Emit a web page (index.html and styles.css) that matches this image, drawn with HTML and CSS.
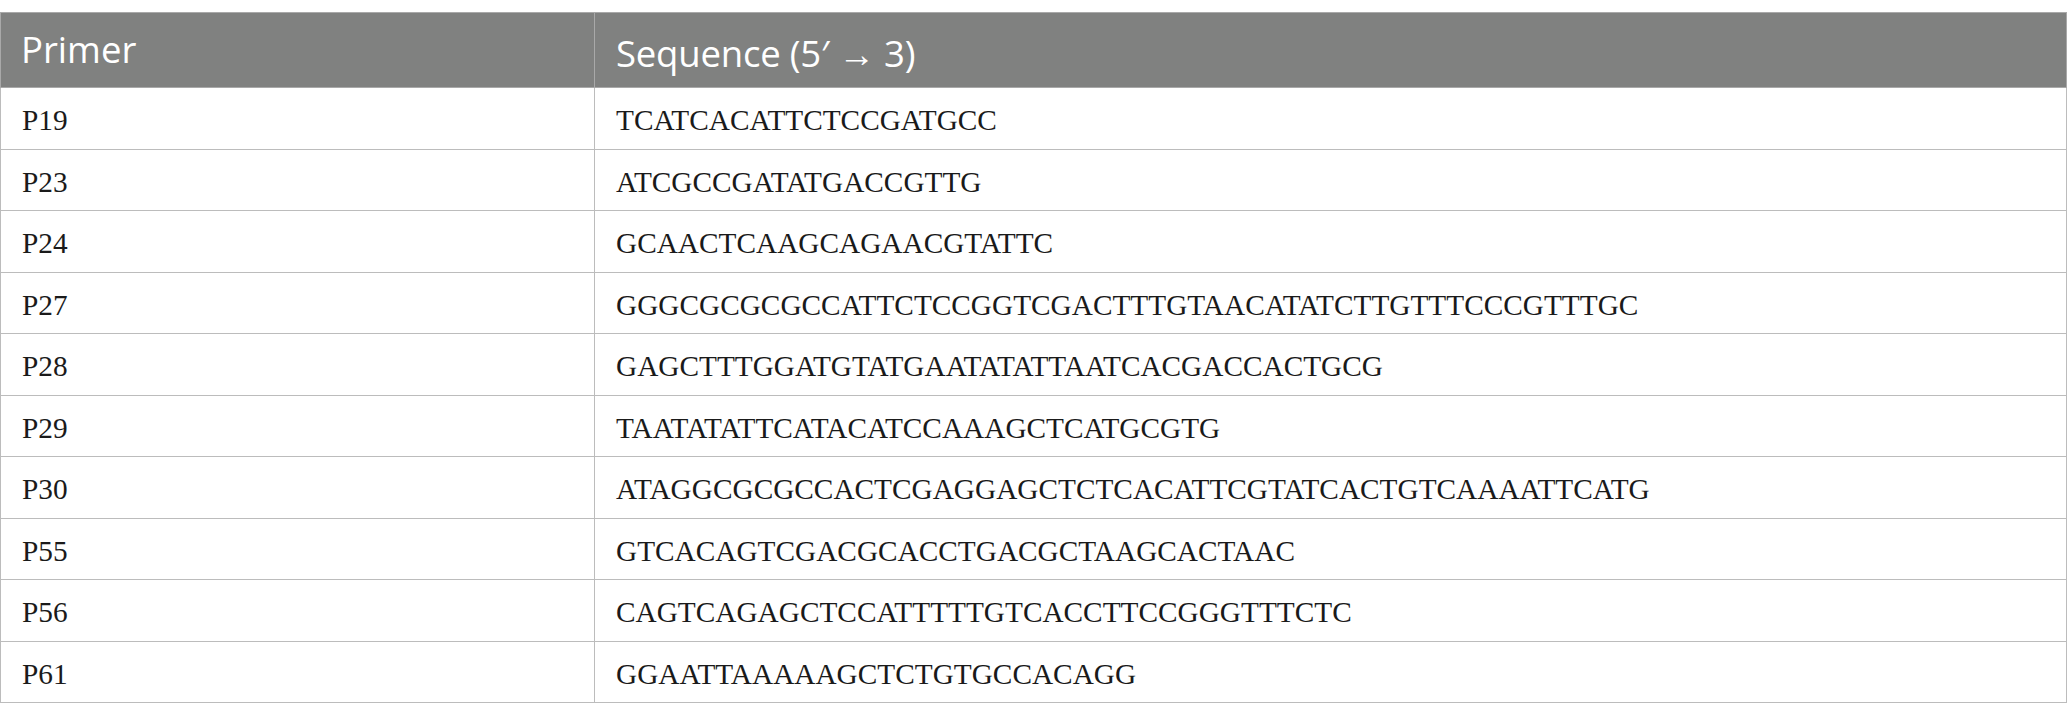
FILE: index.html
```html
<!DOCTYPE html>
<html lang="en">
<head>
<meta charset="utf-8">
<title>Primers</title>
<link rel="stylesheet" href="styles.css">
</head>
<body>
<table class="primers">
  <thead>
    <tr>
      <th class="col-primer">Primer</th>
      <th class="col-seq"><span class="seq-head">Sequence (5′ → 3)</span></th>
    </tr>
  </thead>
  <tbody>
    <tr><td>P19</td><td>TCATCACATTCTCCGATGCC</td></tr>
    <tr><td>P23</td><td>ATCGCCGATATGACCGTTG</td></tr>
    <tr><td>P24</td><td>GCAACTCAAGCAGAACGTATTC</td></tr>
    <tr><td>P27</td><td>GGGCGCGCGCCATTCTCCGGTCGACTTTGTAACATATCTTGTTTCCCGTTTGC</td></tr>
    <tr><td>P28</td><td>GAGCTTTGGATGTATGAATATATTAATCACGACCACTGCG</td></tr>
    <tr><td>P29</td><td>TAATATATTCATACATCCAAAGCTCATGCGTG</td></tr>
    <tr><td>P30</td><td>ATAGGCGCGCCACTCGAGGAGCTCTCACATTCGTATCACTGTCAAAATTCATG</td></tr>
    <tr><td>P55</td><td>GTCACAGTCGACGCACCTGACGCTAAGCACTAAC</td></tr>
    <tr><td>P56</td><td>CAGTCAGAGCTCCATTTTTGTCACCTTCCGGGTTTCTC</td></tr>
    <tr><td>P61</td><td>GGAATTAAAAAGCTCTGTGCCACAGG</td></tr>
  </tbody>
</table>
</body>
</html>
```

FILE: styles.css
```css
html, body {
  margin: 0;
  padding: 0;
  background: #ffffff;
}

body {
  padding-top: 12px;
}

.primers {
  border-collapse: collapse;
  width: 2067px;
  table-layout: fixed;
  border: 1px solid #bcbcbc;
}

.primers th,
.primers td {
  border: 1px solid #bcbcbc;
  text-align: left;
  padding: 0 20px 0 21px;
  white-space: nowrap;
}

.primers th {
  background: #808180;
  color: #ffffff;
  font-family: "Open Sans", "Noto Sans", sans-serif;
  font-weight: 400;
  font-size: 36.5px;
  height: 75px;
  box-sizing: border-box;
  vertical-align: middle;
  border-color: #a9a9a9;
}

.primers th.col-primer {
  width: 594px;
  padding-left: 20px;
  padding-bottom: 2px;
}

.primers th.col-seq {
  padding-top: 6px;
}

.seq-head {
  letter-spacing: -0.2px;
}

.primers td {
  font-family: "Liberation Serif", "Times New Roman", serif;
  font-size: 29.3px;
  color: #1a1a1a;
  height: 61.5px;
  padding-top: 5px;
  box-sizing: border-box;
  vertical-align: middle;
}
```
